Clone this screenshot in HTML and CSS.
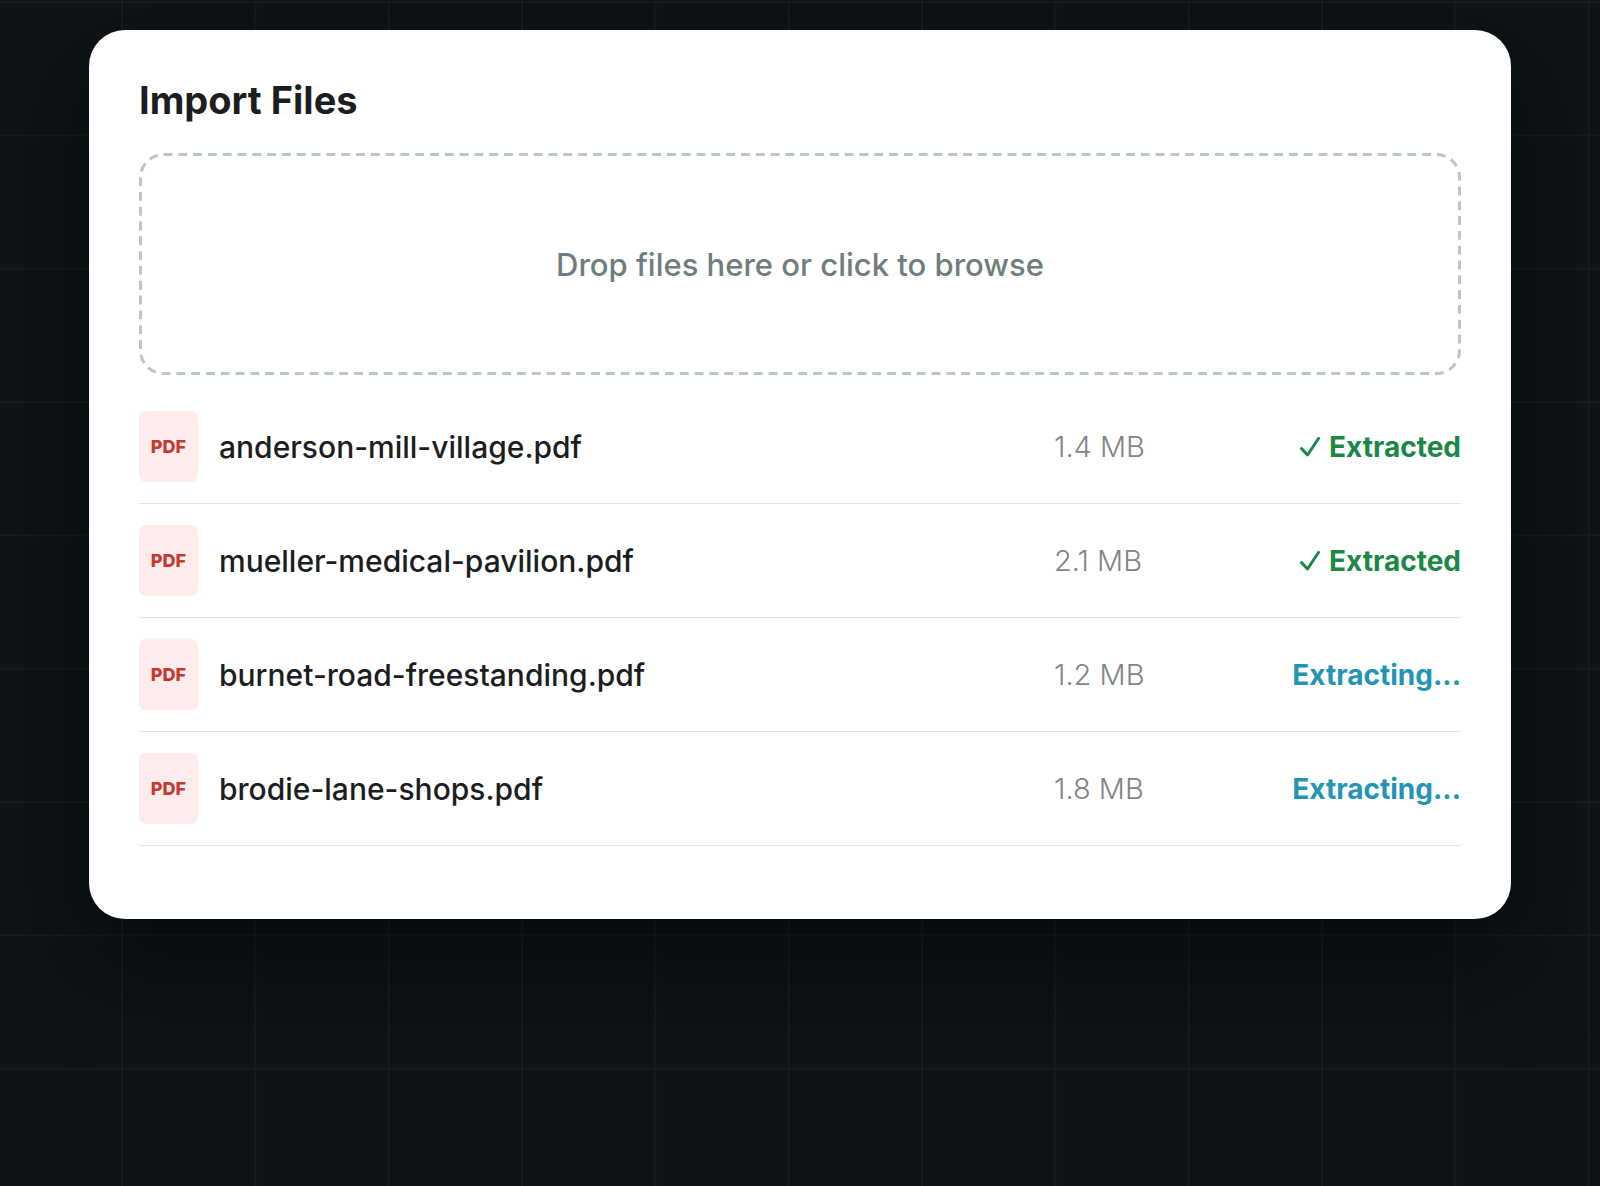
FILE: index.html
```
<!DOCTYPE html>
<html lang="en">
<head>
    <meta charset="UTF-8">
    <meta name="viewport" content="width=device-width, initial-scale=1.0">
    <title>Import Files</title>
    <link rel="stylesheet" href="styles.css">
</head>
<body>
    <main class="card">
        <h1 class="title">Import Files</h1>
        <label class="dropzone" for="files">
            <svg class="outline" aria-hidden="true"><rect x="1.5" y="1.5" rx="23" pathLength="3075"/></svg>
            Drop files here or click to browse
        </label>
        <input type="file" class="file-input" id="files" accept=".pdf" multiple>
        <ul class="file-list">
            <li class="file">
                <span class="badge">PDF</span>
                <span class="name">anderson-mill-village.pdf</span>
                <span class="size">1.4 MB</span>
                <span class="status done">
                    <svg class="check" viewBox="0 0 20 20" aria-hidden="true"><path d="M1.5 11.5 7.5 18 18.5 1.5"/></svg>
                    Extracted
                </span>
            </li>
            <li class="file">
                <span class="badge">PDF</span>
                <span class="name">mueller-medical-pavilion.pdf</span>
                <span class="size">2.1 MB</span>
                <span class="status done">
                    <svg class="check" viewBox="0 0 20 20" aria-hidden="true"><path d="M1.5 11.5 7.5 18 18.5 1.5"/></svg>
                    Extracted
                </span>
            </li>
            <li class="file">
                <span class="badge">PDF</span>
                <span class="name">burnet-road-freestanding.pdf</span>
                <span class="size">1.2 MB</span>
                <span class="status working">Extracting...</span>
            </li>
            <li class="file">
                <span class="badge">PDF</span>
                <span class="name">brodie-lane-shops.pdf</span>
                <span class="size">1.8 MB</span>
                <span class="status working">Extracting...</span>
            </li>
        </ul>
    </main>
</body>
</html>
```
FILE: styles.css
```
*{
    padding: 0;
    margin: 0;
    box-sizing: border-box;
}
/* dark page with a faint square grid, 12 cells across */
body{
    min-height: 100vh;
    padding: 30px 89px;
    font-family: Inter, "Liberation Sans", sans-serif;
    color: #1b1d1e;
    background-color: #0e1417;
    background-image:
        linear-gradient(to right, #171d1f 2px, transparent 2px),
        linear-gradient(to bottom, #171d1f 2px, transparent 2px);
    background-size: calc(100vw / 12) calc(100vw / 12);
    background-position: 121px 1px;
}
.card{
    background-color: #fff;
    border-radius: 36px;
    padding: 50px 50px 73px;
    box-shadow: 0 40px 100px rgba(0, 0, 0, 0.55);
}
.title{
    font-size: 38px;
    line-height: 40px;
    font-weight: 700;
    margin-bottom: 33px;
}
.dropzone{
    position: relative;
    display: flex;
    align-items: center;
    justify-content: center;
    padding: 94px 20px 92px;
    font-size: 31px;
    line-height: 36px;
    font-weight: 500;
    color: #717d7d;
    cursor: pointer;
}
/* dashed border, drawn as svg so the dashes can be longer */
.outline{
    position: absolute;
    top: 0;
    left: 0;
    width: 100%;
    height: 100%;
}
.outline rect{
    width: calc(100% - 3px);
    height: calc(100% - 3px);
    fill: none;
    stroke: #bcc6c8;
    stroke-width: 3;
    stroke-dasharray: 9 6;
}
.file-input{
    position: absolute;
    width: 1px;
    height: 1px;
    opacity: 0;
}
.file-list{
    list-style: none;
    margin-top: 15px;
}
.file{
    display: grid;
    grid-template-columns: 59px 1fr 200px 186px;
    align-items: center;
    gap: 21px;
    padding: 21px 0;
    border-bottom: 1px solid #dfe4e5;
    font-size: 30px;
    line-height: 36px;
}
.badge{
    display: flex;
    align-items: center;
    justify-content: center;
    height: 71px;
    border-radius: 7px;
    background-color: #feecec;
    color: #c43a30;
    font-size: 18px;
    font-weight: 800;
}
.name{
    font-weight: 500;
}
.size{
    color: #7f8586;
    font-size: 29px;
    font-weight: 300;
}
.status{
    display: flex;
    align-items: center;
    justify-content: flex-end;
    gap: 9px;
    font-size: 28px;
    font-weight: 700;
}
.done{
    color: #1c8746;
}
.working{
    color: #2494b5;
}
.check{
    width: 20px;
    height: 20px;
    fill: none;
    stroke: currentColor;
    stroke-width: 3;
    stroke-linecap: round;
    stroke-linejoin: round;
}
```
